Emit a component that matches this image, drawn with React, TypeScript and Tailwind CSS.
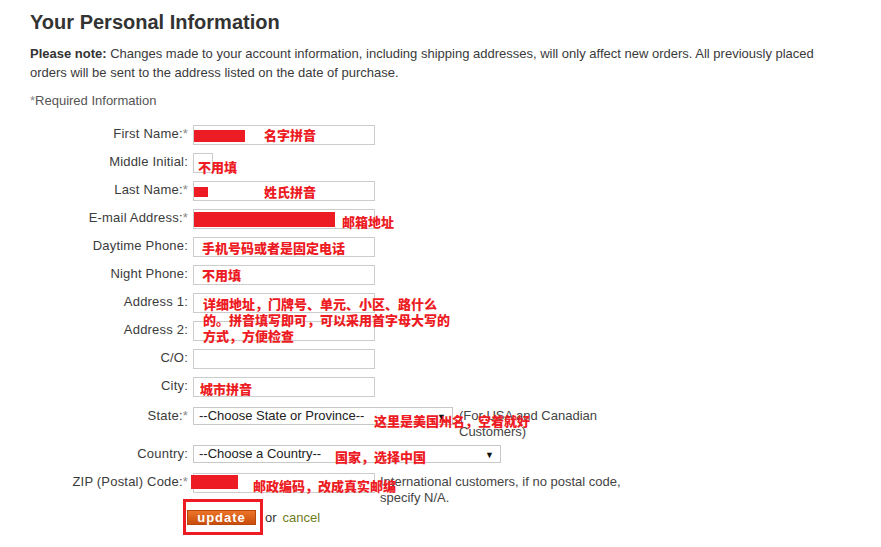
import { ReactNode } from "react";

const redText =
  "absolute whitespace-nowrap font-['Noto_Sans_CJK_SC',sans-serif] font-extrabold text-[13px] leading-[16px] text-[#ed1c24]";

function Row({
  label,
  required,
  children,
  h = "h-[28px]",
}: {
  label: string;
  required?: boolean;
  children: ReactNode;
  h?: string;
}) {
  return (
    <div className={`flex items-start ${h}`}>
      <div className="w-[158px] shrink-0 pt-[1px] text-right leading-[16px] tracking-[0.2px] text-[#3b3b3b]">
        {label}
        {required && <span className="text-[#888]">*</span>}
      </div>
      <div className="ml-[5px] flex items-start">{children}</div>
    </div>
  );
}

function TextBox({ w = "w-[182px]", children }: { w?: string; children?: ReactNode }) {
  return (
    <div className={`relative h-[20px] ${w} border border-[#ccc] bg-white`}>
      {children}
    </div>
  );
}

function Select({ w, text }: { w: string; text: string }) {
  return (
    <div
      className={`relative h-[18px] ${w} border border-[#c8c8c8] bg-white pl-[5px] text-[13px] leading-[16px] text-[#222]`}
    >
      {text}
      <span className="absolute right-[6px] top-[1px] text-[9px] leading-[16px] text-[#111]">▼</span>
    </div>
  );
}

export default function App() {
  return (
    <div className="w-[881px] h-[547px] overflow-hidden bg-white pl-[30px] pt-[10px] font-['Liberation_Sans',Arial,sans-serif] text-[13px] text-[#333]">
      <h1 className="text-[20px] font-bold leading-[24px] text-[#333]">Your Personal Information</h1>

      <p className="mt-[10px] w-[818px] leading-[19px] text-[#3a3a3a]">
        <b className="text-[#333]">Please note:</b> Changes made to your account information, including shipping
        addresses, will only affect new orders. All previously placed orders will be sent to the address listed on
        the date of purchase.
      </p>

      <p className="mt-[9px] leading-[19px] text-[#555]">
        <span className="text-[#888]">*</span>Required Information
      </p>

      <div className="mt-[15px] flex flex-col">
        <Row label="First Name:" required>
          <TextBox>
            <div className="absolute left-0 top-[4px] h-[12px] w-[51px] bg-[#ed1c24]" />
            <span className={`${redText} left-[70px] top-[1px]`}>名字拼音</span>
          </TextBox>
        </Row>

        <Row label="Middle Initial:">
          <TextBox w="w-[20px]">
            <span className={`${redText} left-[4px] top-[5px]`}>不用填</span>
          </TextBox>
        </Row>

        <Row label="Last Name:" required>
          <TextBox>
            <div className="absolute left-0 top-[5px] h-[10px] w-[14px] bg-[#ed1c24]" />
            <span className={`${redText} left-[70px] top-[2px]`}>姓氏拼音</span>
          </TextBox>
        </Row>

        <Row label="E-mail Address:" required>
          <TextBox>
            <div className="absolute left-0 top-[2px] h-[15px] w-[141px] bg-[#ed1c24]" />
            <span className={`${redText} left-[148px] top-[4px]`}>邮箱地址</span>
          </TextBox>
        </Row>

        <Row label="Daytime Phone:">
          <TextBox>
            <span className={`${redText} left-[8px] top-[2px]`}>手机号码或者是固定电话</span>
          </TextBox>
        </Row>

        <Row label="Night Phone:">
          <TextBox>
            <span className={`${redText} left-[8px] top-[1px]`}>不用填</span>
          </TextBox>
        </Row>

        <Row label="Address 1:">
          <TextBox />
        </Row>

        <Row label="Address 2:">
          <TextBox />
        </Row>

        <Row label="C/O:">
          <TextBox />
        </Row>

        <Row label="City:" h="h-[30px]">
          <TextBox>
            <span className={`${redText} left-[6px] top-[3px]`}>城市拼音</span>
          </TextBox>
        </Row>

        <Row label="State:" required h="h-[38px]">
          <div className="relative">
            <Select w="w-[260px]" text="--Choose State or Province--" />
          </div>
          <div className="ml-[6px] mt-[1px] leading-[16px] text-[#444]">
            (For USA and Canadian
            <br />
            Customers)
          </div>
        </Row>

        <Row label="Country:">
          <Select w="w-[308px]" text="--Choose a Country--" />
        </Row>

        <Row label="ZIP (Postal) Code:" required h="h-[35px]">
          <TextBox>
            <div className="absolute left-[-3px] top-[1px] h-[14px] w-[47px] bg-[#ed1c24]" />
          </TextBox>
          <div className="ml-[5px] mt-[1px] leading-[16px] text-[#444]">
            International customers, if no postal code,
            <br />
            specify N/A.
          </div>
        </Row>

        <div className="flex items-center pl-[157px]">
          <div className="relative">
            <button className="h-[15px] w-[69px] border border-[#b9470b] bg-gradient-to-b from-[#ec7428] to-[#c94e0c] text-[13px] font-bold leading-[13px] tracking-[1px] text-white">
              update
            </button>
            <div className="pointer-events-none absolute left-[-4px] top-[-9px] h-[36px] w-[80px] border-[3px] border-[#ed1c24]" />
          </div>
          <span className="ml-[9px] text-[#333]">or</span>
          <a className="ml-[6px] text-[#6f7d1d]" href="#">
            cancel
          </a>
        </div>
      </div>

      {/* annotations that spill over several rows */}
      <div className="pointer-events-none">
        <span className={`${redText} left-[203px] top-[296px] whitespace-pre leading-[16px]`}>
          {"详细地址，门牌号、单元、小区、路什么\n的。拼音填写即可，可以采用首字母大写的\n方式，方便检查"}
        </span>
        <span className={`${redText} left-[374px] top-[413px]`}>这里是美国州名，空着就好</span>
        <span className={`${redText} left-[335px] top-[449px]`}>国家，选择中国</span>
        <span className={`${redText} left-[253px] top-[478px]`}>邮政编码，改成真实邮编</span>
      </div>
    </div>
  );
}
